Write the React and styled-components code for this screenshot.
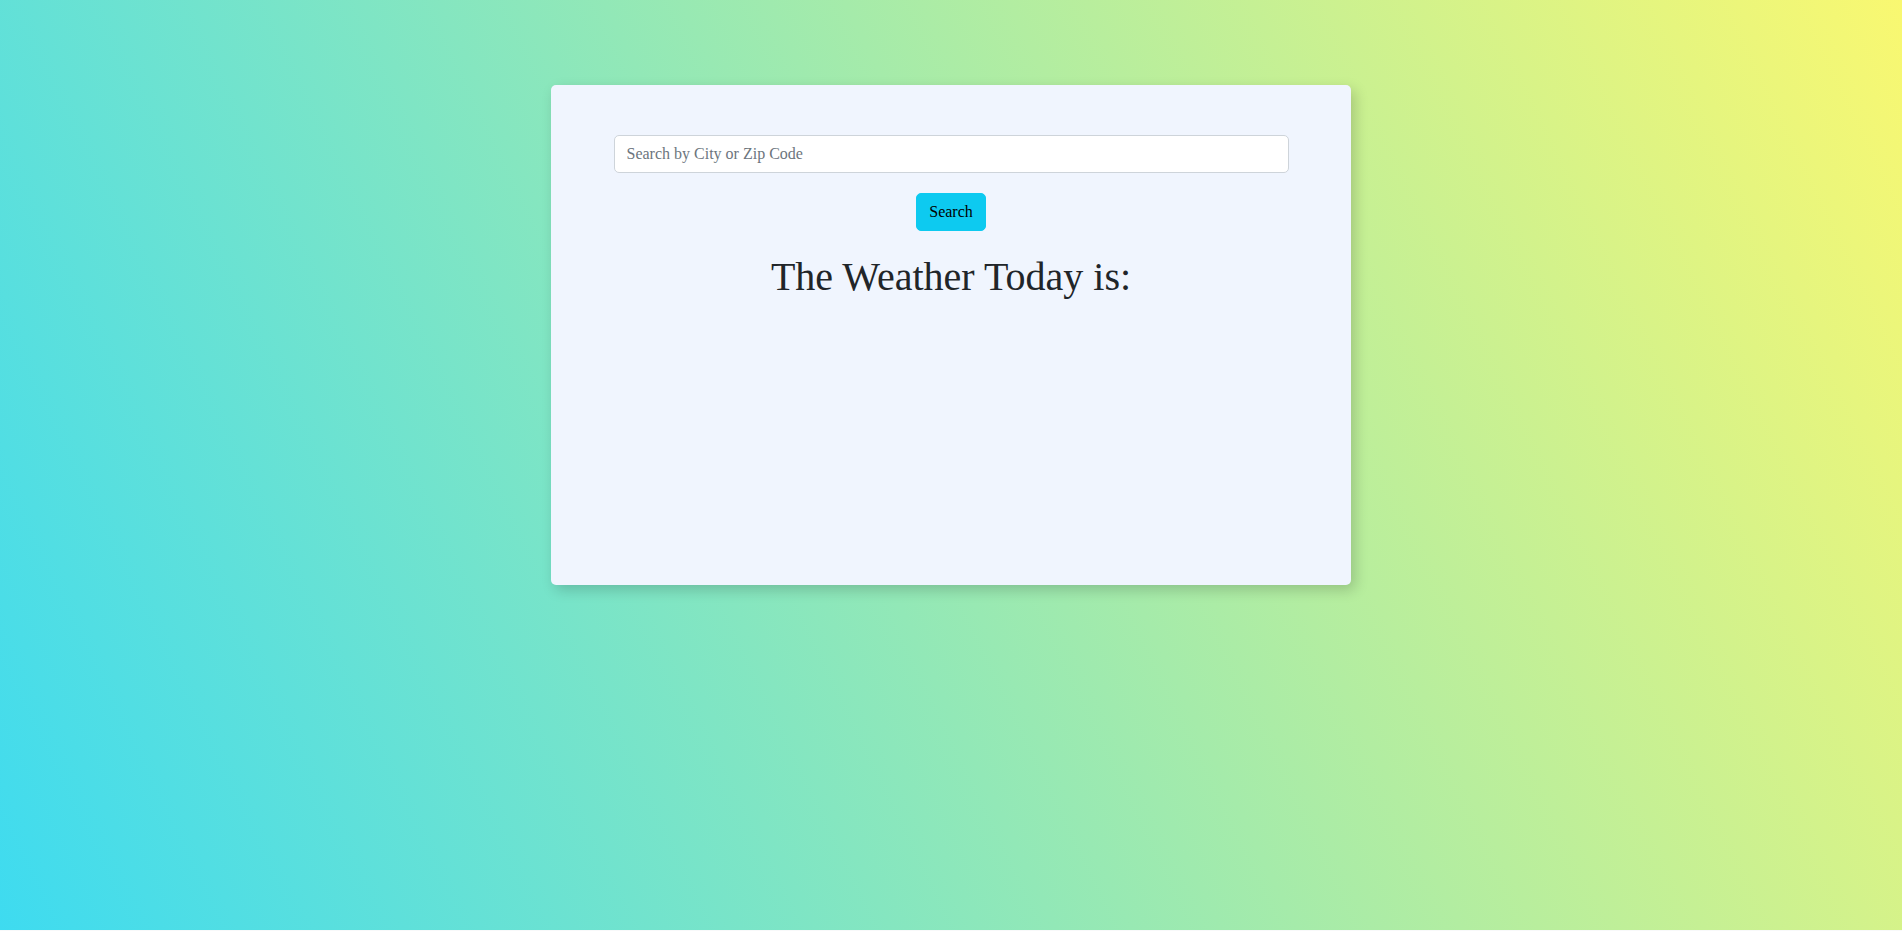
import React, { useState } from 'react'
import styled, { createGlobalStyle } from 'styled-components'

const GlobalStyle = createGlobalStyle`
    html, body {
        margin: 0;
        padding: 0;
        background: #f8f9fa;
    }
    body {
        font-family: "Liberation Serif", "Times New Roman", serif;
        color: #212529;
    }
    * {
        box-sizing: border-box;
    }
`

const Page = styled.div`
    height: 930px;
    background: linear-gradient(64deg, #3edbf0 0%, #f9f871 100%);
    display: flex;
    flex-direction: column;
    align-items: center;
    padding-top: 85px;
`

const Card = styled.div`
    width: 800px;
    height: 500px;
    background: #f0f5fe;
    border-radius: 5px;
    box-shadow: 4px 5px 14px rgba(0, 0, 0, 0.18);
    display: flex;
    flex-direction: column;
    align-items: center;
    padding-top: 50px;
`

const SearchInput = styled.input`
    width: 675px;
    height: 38px;
    padding: 6px 12px;
    font-family: inherit;
    font-size: 16px;
    color: #212529;
    background: #fff;
    border: 1px solid #ced4da;
    border-radius: 5px;
    outline: none;
    &::placeholder {
        color: #6c757d;
    }
`

const SearchButton = styled.button`
    margin-top: 20px;
    height: 38px;
    padding: 6px 12px;
    font-family: inherit;
    font-size: 16px;
    color: #000;
    background: #0dcaf0;
    border: 1px solid #0dcaf0;
    border-radius: 5px;
    cursor: pointer;
`

const Title = styled.h1`
    margin: 22px 0 0;
    font-size: 40px;
    font-weight: 400;
    line-height: 1.2;
    color: #212529;
`

const App = () => {
    const [query, setQuery] = useState('')
    return (
        <>
            <GlobalStyle />
            <Page>
                <Card>
                    <SearchInput
                        value={query}
                        onChange={e => setQuery(e.target.value)}
                        placeholder="Search by City or Zip Code"
                    />
                    <SearchButton>Search</SearchButton>
                    <Title>The Weather Today is:</Title>
                </Card>
            </Page>
        </>
    )
}

export default App
